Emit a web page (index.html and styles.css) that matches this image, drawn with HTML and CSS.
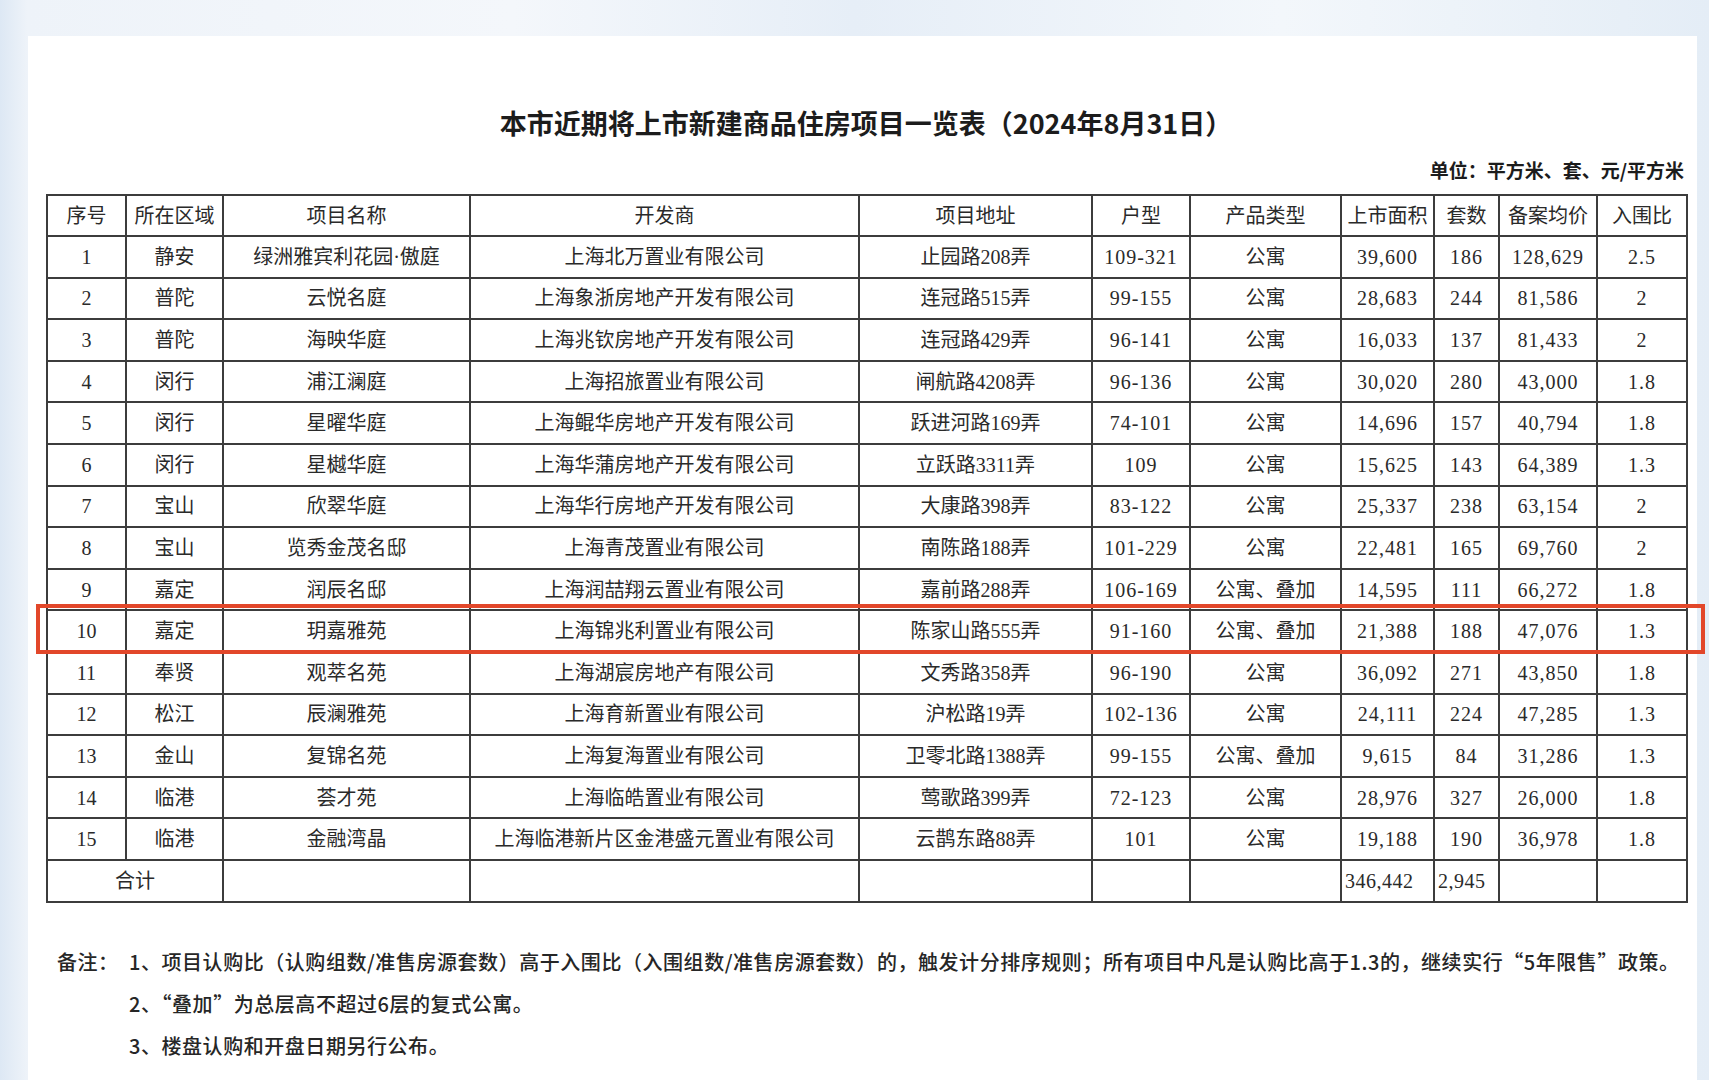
FILE: index.html
```html
<!DOCTYPE html>
<html lang="zh-CN">
<head>
<meta charset="utf-8">
<title>本市近期将上市新建商品住房项目一览表</title>
<link rel="stylesheet" href="styles.css">
</head>
<body>
<div class="sheet">
  <h1 class="title">本市近期将上市新建商品住房项目一览表（2024年8月31日）</h1>
  <div class="units">单位：平方米、套、元/平方米</div>
  <div class="table-wrap">
    <table class="list">
      <colgroup>
        <col class="c1"><col class="c2"><col class="c3"><col class="c4"><col class="c5"><col class="c6"><col class="c7"><col class="c8"><col class="c9"><col class="c10"><col class="c11">
      </colgroup>
      <thead>
        <tr><th>序号</th><th>所在区域</th><th>项目名称</th><th>开发商</th><th>项目地址</th><th>户型</th><th>产品类型</th><th>上市面积</th><th>套数</th><th>备案均价</th><th>入围比</th></tr>
      </thead>
      <tbody>
        <tr><td>1</td><td>静安</td><td>绿洲雅宾利花园·傲庭</td><td>上海北万置业有限公司</td><td>止园路208弄</td><td class="n">109-321</td><td>公寓</td><td class="n">39,600</td><td class="n">186</td><td class="n">128,629</td><td class="n">2.5</td></tr>
        <tr><td>2</td><td>普陀</td><td>云悦名庭</td><td>上海象浙房地产开发有限公司</td><td>连冠路515弄</td><td class="n">99-155</td><td>公寓</td><td class="n">28,683</td><td class="n">244</td><td class="n">81,586</td><td class="n">2</td></tr>
        <tr><td>3</td><td>普陀</td><td>海映华庭</td><td>上海兆钦房地产开发有限公司</td><td>连冠路429弄</td><td class="n">96-141</td><td>公寓</td><td class="n">16,033</td><td class="n">137</td><td class="n">81,433</td><td class="n">2</td></tr>
        <tr><td>4</td><td>闵行</td><td>浦江澜庭</td><td>上海招旅置业有限公司</td><td>闸航路4208弄</td><td class="n">96-136</td><td>公寓</td><td class="n">30,020</td><td class="n">280</td><td class="n">43,000</td><td class="n">1.8</td></tr>
        <tr><td>5</td><td>闵行</td><td>星曜华庭</td><td>上海鲲华房地产开发有限公司</td><td>跃进河路169弄</td><td class="n">74-101</td><td>公寓</td><td class="n">14,696</td><td class="n">157</td><td class="n">40,794</td><td class="n">1.8</td></tr>
        <tr><td>6</td><td>闵行</td><td>星樾华庭</td><td>上海华蒲房地产开发有限公司</td><td>立跃路3311弄</td><td class="n">109</td><td>公寓</td><td class="n">15,625</td><td class="n">143</td><td class="n">64,389</td><td class="n">1.3</td></tr>
        <tr><td>7</td><td>宝山</td><td>欣翠华庭</td><td>上海华行房地产开发有限公司</td><td>大康路398弄</td><td class="n">83-122</td><td>公寓</td><td class="n">25,337</td><td class="n">238</td><td class="n">63,154</td><td class="n">2</td></tr>
        <tr><td>8</td><td>宝山</td><td>览秀金茂名邸</td><td>上海青茂置业有限公司</td><td>南陈路188弄</td><td class="n">101-229</td><td>公寓</td><td class="n">22,481</td><td class="n">165</td><td class="n">69,760</td><td class="n">2</td></tr>
        <tr><td>9</td><td>嘉定</td><td>润辰名邸</td><td>上海润喆翔云置业有限公司</td><td>嘉前路288弄</td><td class="n">106-169</td><td>公寓、叠加</td><td class="n">14,595</td><td class="n">111</td><td class="n">66,272</td><td class="n">1.8</td></tr>
        <tr><td>10</td><td>嘉定</td><td>玥嘉雅苑</td><td>上海锦兆利置业有限公司</td><td>陈家山路555弄</td><td class="n">91-160</td><td>公寓、叠加</td><td class="n">21,388</td><td class="n">188</td><td class="n">47,076</td><td class="n">1.3</td></tr>
        <tr><td>11</td><td>奉贤</td><td>观萃名苑</td><td>上海湖宸房地产有限公司</td><td>文秀路358弄</td><td class="n">96-190</td><td>公寓</td><td class="n">36,092</td><td class="n">271</td><td class="n">43,850</td><td class="n">1.8</td></tr>
        <tr><td>12</td><td>松江</td><td>辰澜雅苑</td><td>上海育新置业有限公司</td><td>沪松路19弄</td><td class="n">102-136</td><td>公寓</td><td class="n">24,111</td><td class="n">224</td><td class="n">47,285</td><td class="n">1.3</td></tr>
        <tr><td>13</td><td>金山</td><td>复锦名苑</td><td>上海复海置业有限公司</td><td>卫零北路1388弄</td><td class="n">99-155</td><td>公寓、叠加</td><td class="n">9,615</td><td class="n">84</td><td class="n">31,286</td><td class="n">1.3</td></tr>
        <tr><td>14</td><td>临港</td><td>荟才苑</td><td>上海临皓置业有限公司</td><td>莺歌路399弄</td><td class="n">72-123</td><td>公寓</td><td class="n">28,976</td><td class="n">327</td><td class="n">26,000</td><td class="n">1.8</td></tr>
        <tr><td>15</td><td>临港</td><td>金融湾晶</td><td>上海临港新片区金港盛元置业有限公司</td><td>云鹊东路88弄</td><td class="n">101</td><td>公寓</td><td class="n">19,188</td><td class="n">190</td><td class="n">36,978</td><td class="n">1.8</td></tr>
        <tr class="total"><td colspan="2">合计</td><td></td><td></td><td></td><td></td><td></td><td class="n left">346,442</td><td class="n left">2,945</td><td></td><td></td></tr>
      </tbody>
    </table>
    <div class="highlight"></div>
  </div>
  <div class="notes">
    <div class="notes-label">备注：</div>
    <div class="notes-list">
      <p>1、项目认购比（认购组数/准售房源套数）高于入围比（入围组数/准售房源套数）的，触发计分排序规则；所有项目中凡是认购比高于1.3的，继续实行“5年限售”政策。</p>
      <p>2、“叠加”为总层高不超过6层的复式公寓。</p>
      <p>3、楼盘认购和开盘日期另行公布。</p>
    </div>
  </div>
</div>
</body>
</html>
```

FILE: styles.css
```css
html, body {
  margin: 0;
  padding: 0;
}

body {
  width: 1709px;
  height: 1080px;
  overflow: hidden;
  background:
    linear-gradient(90deg, #dde8f4 0%, #eef3f9 1.6%, #f4f7fb 30%, #e6eef7 50%, #f3f7fb 75%, #e4edf6 100%);
  font-family: "Noto Sans CJK SC", "Noto Sans", sans-serif;
  color: #262626;
}

.sheet {
  margin: 36px 12px 0 28px;
  padding: 69px 11px 0 18px;
  height: 1044px;
  box-sizing: border-box;
  background: #ffffff;
}

.title {
  margin: 0;
  font-size: 27px;
  line-height: 36px;
  font-weight: 700;
  text-align: center;
  color: #1c1c1c;
}

.units {
  margin-top: 15px;
  font-size: 19px;
  line-height: 28px;
  font-weight: 700;
  text-align: right;
  padding-right: 2px;
  color: #1c1c1c;
}

.table-wrap {
  position: relative;
  margin-top: 10px;
  width: 1640px;
}

.list {
  width: 1640px;
  table-layout: fixed;
  border-collapse: collapse;
  font-family: "Liberation Serif", "Noto Sans CJK SC", serif;
  font-size: 20px;
  line-height: 26px;
  color: #2a2a2a;
}

.c1 { width: 79px; }
.c2 { width: 97px; }
.c3 { width: 247px; }
.c4 { width: 389px; }
.c5 { width: 233px; }
.c6 { width: 98px; }
.c7 { width: 151px; }
.c8 { width: 93px; }
.c9 { width: 65px; }
.c10 { width: 98px; }
.c11 { width: 90px; }

.list th,
.list td {
  border: 2px solid #3c3c3c;
  height: 39.6px;
  padding: 0;
  text-align: center;
  vertical-align: middle;
  font-weight: 400;
  white-space: nowrap;
  overflow: visible;
}

.list th {
  height: 39px;
}

.list td.n {
  letter-spacing: 1px;
}

.list td.left {
  text-align: left;
  padding-left: 3px;
  letter-spacing: 0.5px;
}

.highlight {
  position: absolute;
  left: -10px;
  top: 410px;
  width: 1669px;
  height: 50px;
  box-sizing: border-box;
  border: 4px solid #e2472a;
  pointer-events: none;
}

.notes {
  display: flex;
  margin-top: 38px;
  margin-left: 11px;
  font-size: 20px;
  line-height: 42px;
  font-weight: 500;
  letter-spacing: 0.55px;
  color: #262626;
}

.notes-label {
  width: 72px;
  flex: none;
}

.notes-list p {
  margin: 0;
  white-space: nowrap;
}
```
